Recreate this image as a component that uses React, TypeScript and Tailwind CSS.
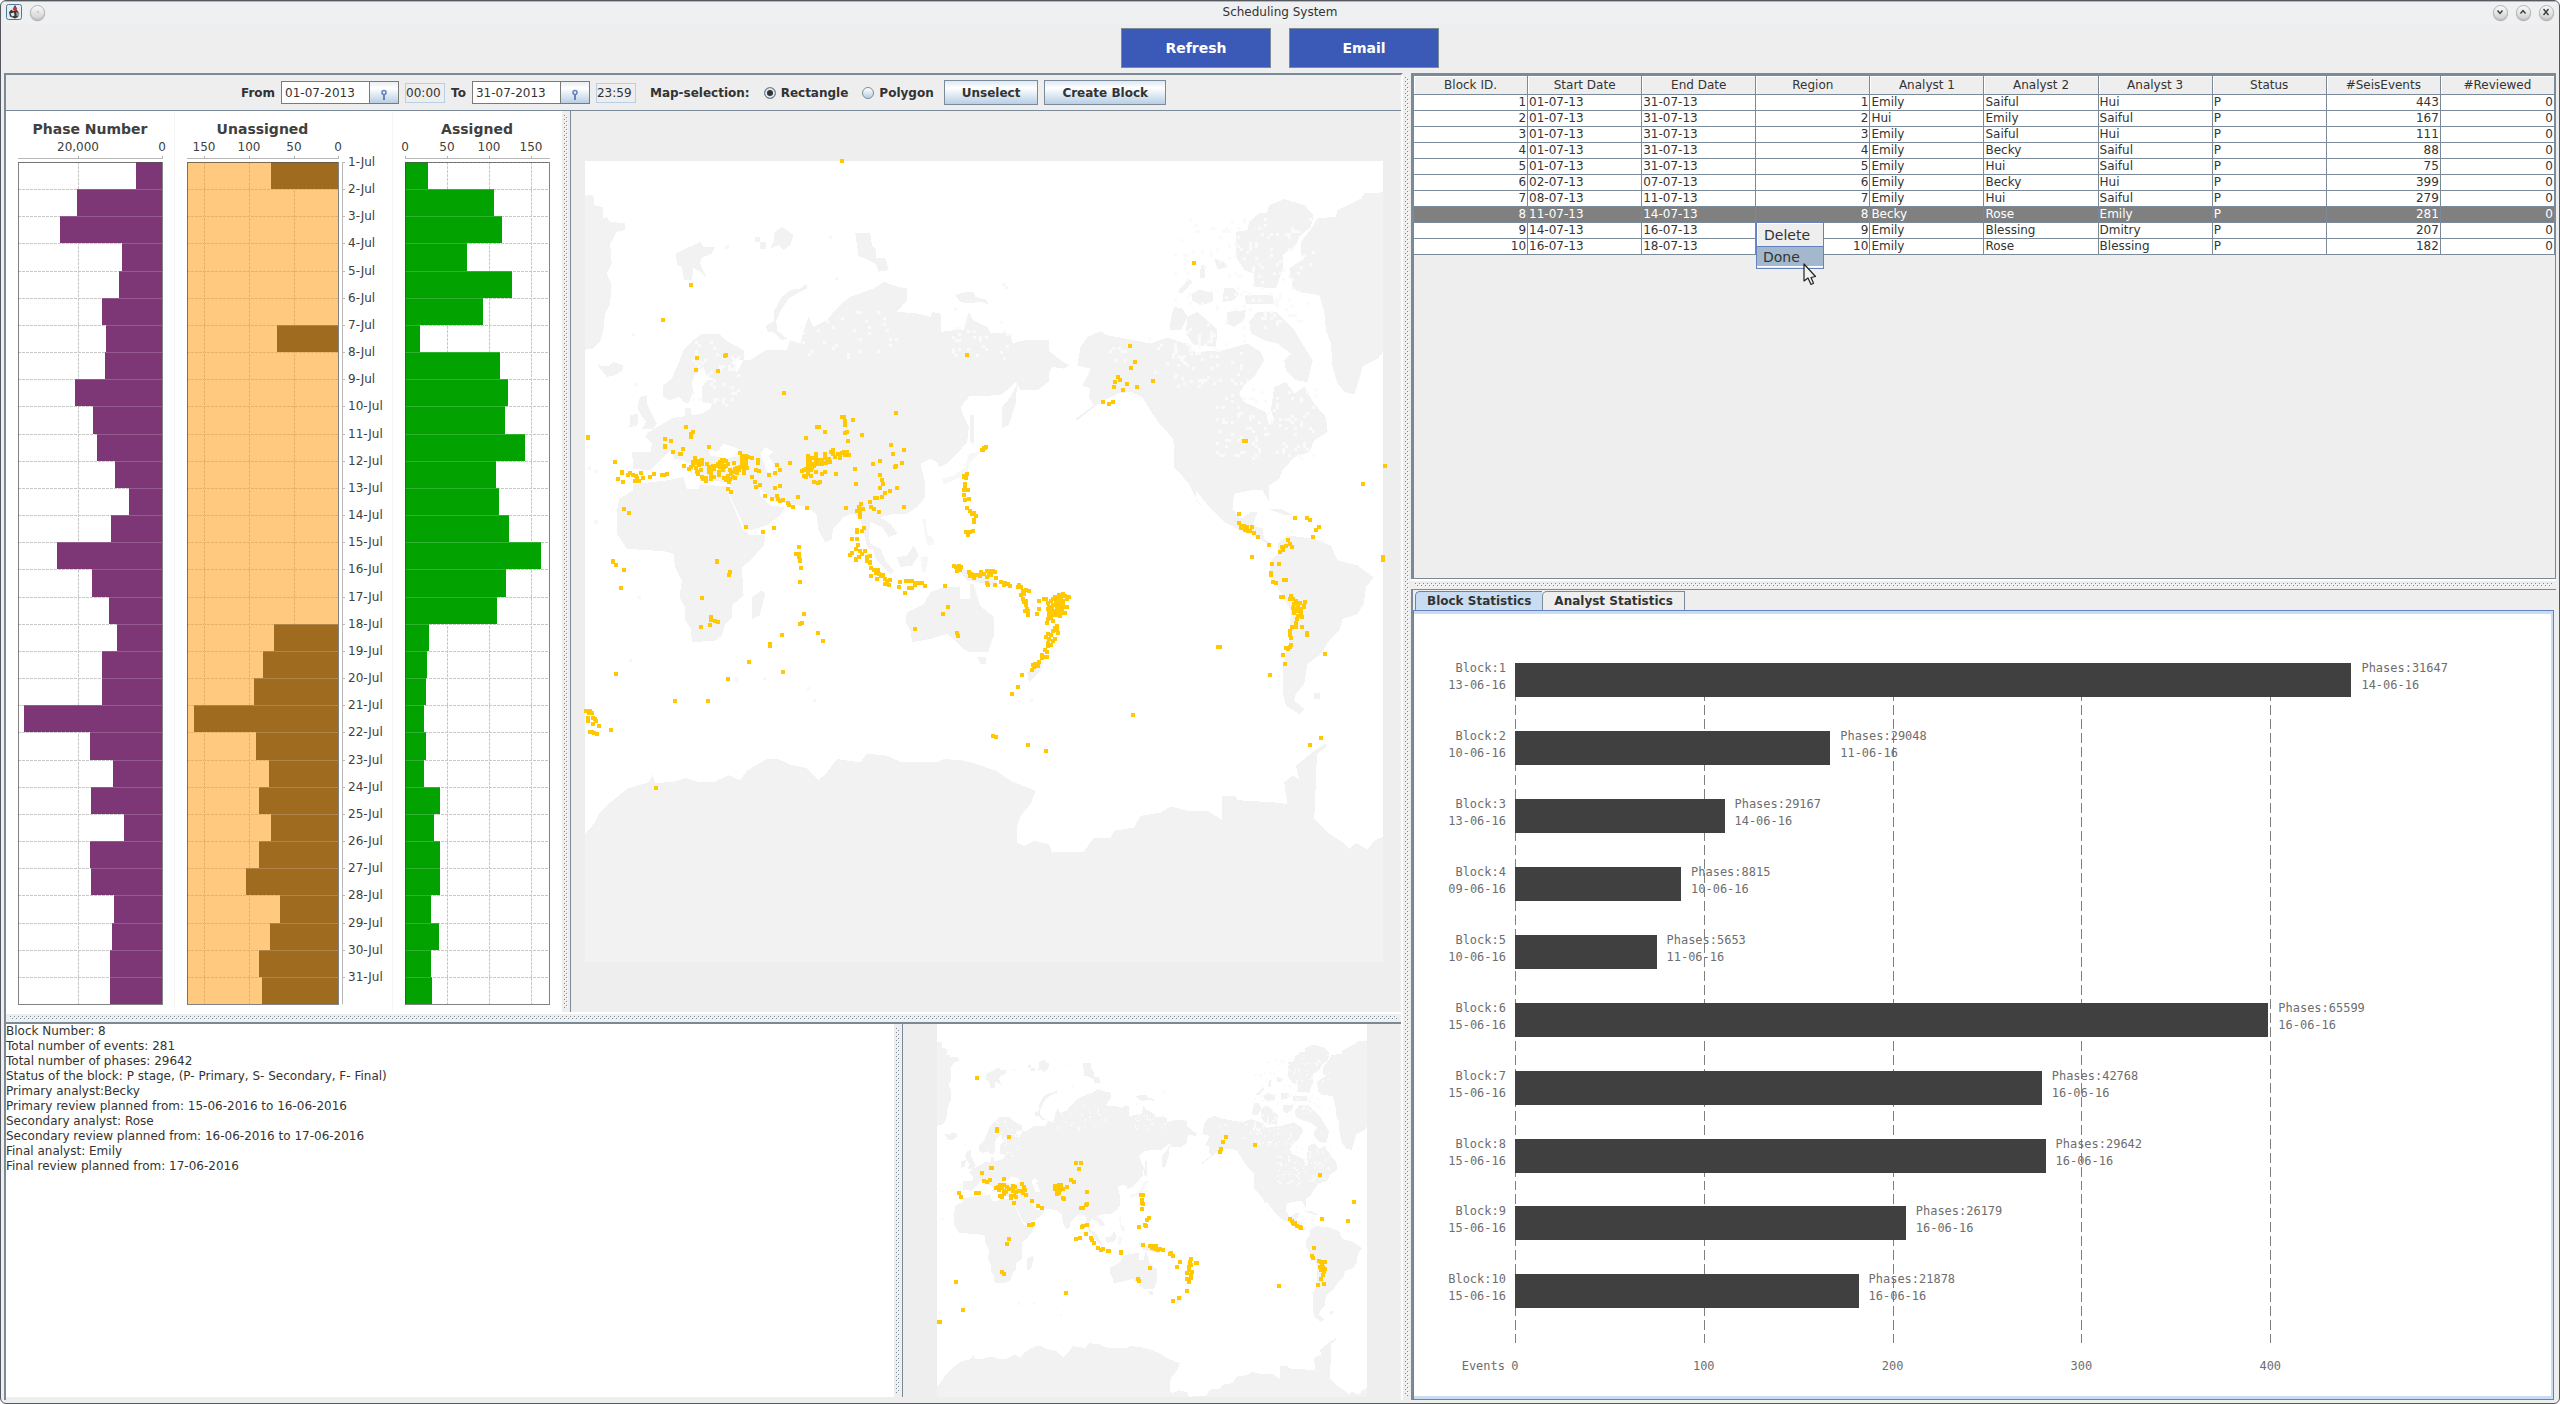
import React from "react";

type Point = [number, number];

const parsePoints = (text: string): Point[] =>
  text
    .trim()
    .split(/\s+/)
    .map((pair) => pair.split(",").map(Number) as Point);

/* ------------------------------------------------------------------ data */

const PHASES = [
  136, 77, 60, 122, 119, 102, 106, 105, 75, 93, 97, 115, 129, 111, 57, 92, 109, 117, 102, 102, 24, 90, 113, 91, 124,
  90, 91, 114, 112, 110, 110,
];

const UNASSIGNED: (number | null)[] = [
  271, null, null, null, null, null, 277, null, null, null, null, null, null, null, null, null, null, 274, 263, 254,
  194, 256, 269, 259, 271, 259, 246, 280, 270, 259, 262,
];

const ASSIGNED = [
  428, 494, 502, 467, 512, 483, 420, 500, 508, 505, 525, 496, 499, 509, 541, 506, 497, 429, 427, 426, 424, 426, 424,
  440, 434, 440, 440, 431, 439, 431, 432,
];

const COLUMNS = [
  "Block ID.",
  "Start Date",
  "End Date",
  "Region",
  "Analyst 1",
  "Analyst 2",
  "Analyst 3",
  "Status",
  "#SeisEvents",
  "#Reviewed",
];

const NUMERIC = [true, false, false, true, false, false, false, false, true, true];

const ROWS = [
  ["1", "01-07-13", "31-07-13", "1", "Emily", "Saiful", "Hui", "P", "443", "0"],
  ["2", "01-07-13", "31-07-13", "2", "Hui", "Emily", "Saiful", "P", "167", "0"],
  ["3", "01-07-13", "31-07-13", "3", "Emily", "Saiful", "Hui", "P", "111", "0"],
  ["4", "01-07-13", "31-07-13", "4", "Emily", "Becky", "Saiful", "P", "88", "0"],
  ["5", "01-07-13", "31-07-13", "5", "Emily", "Hui", "Saiful", "P", "75", "0"],
  ["6", "02-07-13", "07-07-13", "6", "Emily", "Becky", "Hui", "P", "399", "0"],
  ["7", "08-07-13", "11-07-13", "7", "Emily", "Hui", "Saiful", "P", "279", "0"],
  ["8", "11-07-13", "14-07-13", "8", "Becky", "Rose", "Emily", "P", "281", "0"],
  ["9", "14-07-13", "16-07-13", "9", "Emily", "Blessing", "Dmitry", "P", "207", "0"],
  ["10", "16-07-13", "18-07-13", "10", "Emily", "Rose", "Blessing", "P", "182", "0"],
];

const BLOCKS = [
  { id: 1, start: "13-06-16", events: 443, phases: 31647, end: "14-06-16" },
  { id: 2, start: "10-06-16", events: 167, phases: 29048, end: "11-06-16" },
  { id: 3, start: "13-06-16", events: 111, phases: 29167, end: "14-06-16" },
  { id: 4, start: "09-06-16", events: 88, phases: 8815, end: "10-06-16" },
  { id: 5, start: "10-06-16", events: 75, phases: 5653, end: "11-06-16" },
  { id: 6, start: "15-06-16", events: 399, phases: 65599, end: "16-06-16" },
  { id: 7, start: "15-06-16", events: 279, phases: 42768, end: "16-06-16" },
  { id: 8, start: "15-06-16", events: 281, phases: 29642, end: "16-06-16" },
  { id: 9, start: "15-06-16", events: 207, phases: 26179, end: "16-06-16" },
  { id: 10, start: "15-06-16", events: 182, phases: 21878, end: "16-06-16" },
];

const DETAILS = [
  "Block Number: 8",
  "Total number of events: 281",
  "Total number of phases: 29642",
  "Status of the block: P stage, (P- Primary, S- Secondary, F- Final)",
  "Primary analyst:Becky",
  "Primary review planned from: 15-06-2016 to 16-06-2016",
  "Secondary analyst: Rose",
  "Secondary review planned from: 16-06-2016 to 17-06-2016",
  "Final analyst: Emily",
  "Final review planned from: 17-06-2016",
].join("\n");

/* Event epicentres, one list per quadrant of the world map. */
const EVENTS_NW = parsePoints(`
846,93 393,465 309,570 411,684 408,720 498,675 495,678 474,723 672,789 1221,675 1008,849 846,861 852,861 855,872 855,884
879,870 771,891 775,891 795,906 738,924 855,909 861,906 864,933 906,915 993,945 999,972 1032,960 1026,999 1005,1011
1008,1008 960,993 939,1002 885,1017 888,1062 960,1035 964,1048 969,1062 960,1074 990,1083 975,1089 966,1101 1011,1074
945,1104 951,1104 930,1114 933,1131 942,1137 957,1146 1032,1131 84,920 84,924 378,891 398,906 393,910 393,921 315,927 333,933
315,946 315,951 447,951 339,966 369,957 360,972 363,972 165,996 186,1025 186,1029 174,1047 189,1056 204,1035 210,1029 219,1035 228,1036
231,1044 225,1052 237,1052 243,1029 249,1044 270,1041 282,1032 306,1035 313,1035 321,1032 192,1137 207,1149
372,1008 387,1017 393,1011 399,1005 399,996 405,982 405,990 411,998 416,1004 425,988 417,992 408,1012 411,1024
414,1032 423,1020 427,1000 425,1041 430,1046 438,1052 441,1002 438,1044 447,1012 453,1010 460,1006 468,1006
474,1000 480,996 486,988 492,990 498,992 502,1000 498,1006 486,1002 478,1010 453,1020 453,1030 453,1040 453,1047
462,1040 447,1024 462,1016 477,1024 477,1034 489,1018 492,1010 492,1042 498,1050 507,1056 510,1046 504,1036
512,1030 510,1020 518,1024 518,1040 524,1042 524,1016 522,999 531,1014 531,1029 538,1010 536,1020 540,969
546,976 546,990 546,1002 552,1010 552,1028 552,1018 558,990 558,978 562,981 558,1000 560,1012 576,984 594,990
594,998 586,1020 597,1023 576,1041 585,1056 588,1070 600,1065 504,1077 513,1086 627,1035 645,1029 660,1020
651,1005 690,999 645,1074 660,1068 615,1097 636,1105 651,1098 654,1106 660,1112 669,1110 684,1119 687,1125
699,1131 714,1101 741,1134 558,1191 609,1204 642,1194
744,978 744,988 744,998 742,992 750,1000 750,990 755,984 768,972 768,982 766,992 774,990 774,1002 780,996
786,990 795,972 795,982 800,988 798,998 786,1000 808,994 806,986 813,966 819,960 819,972 825,980 834,970
840,978 840,984 846,968 852,966 855,974 861,966 867,974 744,1010 738,1016 732,1020 724,1023 730,1036 736,1040
744,1032 744,1022 752,1018 756,1012 762,1006 768,1026 762,1000 752,1036 795,1026 786,1032 828,1032 762,1056
774,1059 780,1056 858,1134 903,1122 897,1130 891,1142 900,1142 909,1137 900,1152 900,1160 912,1194 906,1203
891,1200 891,1206 876,1227 891,1227 894,1245 888,1256 900,1262 876,1269 870,1275 906,1272 915,1263 897,1280
888,1287 920,1280 930,1278 921,1290 930,1296 933,1311 942,1318 954,1318 933,1335 948,1326 957,1330 951,1344
963,1336 969,1334 975,1344 980,1352 990,1347 975,1360 987,1362 1020,1353 1017,1368 1038,1350 1048,1350
1056,1350 1047,1371 1056,1371 1065,1362 1068,1358 1078,1358 1086,1356 1095,1365 1035,1386 1155,1365 1164,1428
717,1251 708,1272 717,1272 717,1280 720,1290 723,1311 720,1353 471,1293 510,1323 507,1332 159,1293 167,1302
192,1317 183,1371 426,1401 1266,960 1272,954 1277,951 1212,1038 1210,1040 1220,1032 1218,1042 1215,1062
1215,1072 1210,1080 1218,1080 1224,1080 1212,1094 1215,1110 1227,1107 1221,1134 1228,1142 1236,1152 1240,1148
1247,1158 1240,1168 1242,1174 1216,1206 1228,1206 1238,1203 1224,1214 1182,1305 1188,1308 1196,1305 1203,1308
1190,1320 1198,1318 1227,1323 1233,1330 1230,1336 1240,1334 1240,1342 1250,1332 1260,1336 1262,1323 1270,1330
1278,1338 1278,1322 1284,1328 1290,1320 1296,1322 1302,1323 1290,1334 1305,1341 1278,1356 1281,1362 1302,1362
1320,1353 1329,1362 1332,1356 1342,1360 1347,1365 1374,1364 1371,1369 1380,1370 1386,1380 1404,1380 1395,1378 1382,1394
1390,1390 1388,1404 1390,1414 1395,1410 1396,1424 1398,1434 1434,1410 1434,1434`);

const EVENTS_NE = parsePoints(`
699,399 507,648 522,696 510,714 471,741 477,750 462,756 459,771 498,762 486,780 528,771 576,753 426,816 444,822
456,816 851,933 855,933 1272,1008 1206,1062 834,1152 1002,1164 1038,1164 1048,1170 1074,1191 1065,1200 1056,1221
834,1178 840,1186 842,1194 850,1188 852,1200 858,1190 862,1202 868,1202 873,1191 879,1209 891,1220 924,1245
873,1281 981,1230 986,1242 992,1251 975,1248 962,1250 966,1260 957,1266 933,1299 954,1299 930,1328 930,1334 936,1353
945,1356 970,1347 976,1347 1266,1281 1266,1287 961,1398 967,1398 990,1395 988,1405 996,1404 1004,1412 1000,1420
1010,1424 1018,1416 1032,1413 1028,1428 1000,1434 1012,1434 1020,1434 250,1404 256,1406 262,1416 270,1412
276,1404 282,1398 288,1404 294,1394 306,1391 300,1400 312,1396 324,1398 318,1406 308,1410 296,1412 286,1414
276,1422 266,1428 262,1436 274,1434 288,1426 298,1424 308,1424 316,1430 300,1434`);

const EVENTS_SW = parsePoints(`
732,99 726,126 720,129 774,156 789,180 666,162 630,190 630,196 567,243 669,273 504,294 444,360 345,360 168,279
453,108 453,117 465,120 474,123 450,132 423,138 1149,99 1065,144 1191,156 1194,165 1401,90 1401,102 1428,99
1392,90 1383,282 1371,318 1353,339 78,390 90,390 88,398 96,396 84,412 84,420 99,412 105,414 108,422 99,429
117,435 90,453 96,453 102,456 111,459 153,447 288,621 1296,465 1305,468 1401,492`);

const EVENTS_SE = parsePoints(`
266,90 276,90 290,94 300,96 297,106 288,104 276,102 266,104 262,114 260,128 272,112 278,120 312,96 318,80 290,86
304,86 288,135 282,142 290,148 278,152 292,158 262,160 255,168 270,164 282,174 276,182 264,176 262,186 272,194
262,196 252,208 260,214 260,228 244,222 243,232 252,230 234,243 228,250 232,256 222,250 216,252 220,260 213,267
516,402 255,510 773,198 777,198 927,282 966,222 972,249 990,192 988,200 980,206 975,203 988,152 988,162 990,172
993,138 1005,138 1004,128 1008,116 1012,106 1000,96 1006,86 1012,92 1020,96 1024,108 1018,84 1030,77 996,82
1024,138 1038,158 1038,164 1092,219 1080,471 1047,492`);

const WORLD_EVENTS: Point[] = [
  ...EVENTS_NW.map(([x, y]): Point => [x - 75, y - 93]),
  ...EVENTS_NE.map(([x, y]): Point => [x + 1125, y - 93]),
  ...EVENTS_SW.map(([x, y]): Point => [x - 75, y + 1257]),
  ...EVENTS_SE.map(([x, y]): Point => [x + 1125, y + 1257]),
];

/* Epicentres of the selected block. */
const BLOCK_EVENTS = parsePoints(`
255,204 315,357 315,362 351,381 1002,381 993,396 987,416 984,426 1089,405 1284,495 552,460 567,460 561,477
296,474 300,474 270,489 276,513 285,516 294,510 336,507 201,549 207,561 252,549 261,549 312,534 318,532 324,526
336,525 322,540 330,534 336,542 344,532 350,536 342,546 336,552 324,558 330,562 363,528 369,532 360,536 364,542
372,546 380,544 357,558 366,558 372,562 357,564 366,579 390,522 396,531 399,540 390,542 394,549 402,555 420,573
438,589 450,594 411,645 416,645 423,642 489,528 489,538 496,528 502,526 507,525 498,536 504,540 512,537 525,531 495,546
495,552 500,548 537,510 546,516 513,564 516,567 585,546 585,582 582,584 567,594 573,594 570,651 573,648 585,645
582,672 552,687 564,684 597,684 600,690 606,699 618,714 627,720 633,717 648,723 652,723 687,726 687,730 747,555
753,555 750,570 750,578 753,582 750,597 771,624 765,630 759,645 762,648 741,651 753,705 774,708 783,708 792,708
780,714 788,716 797,720 804,717 813,720 834,732 838,730 843,738 864,756 855,771 897,747 894,756 897,766 894,762
891,772 890,780 900,786 885,789 896,796 897,804 885,807 891,816 912,759 915,759 885,843 861,864 843,873 774,774
738,807 741,813 522,849 192,816 213,900 141,936 144,936 351,687 345,702 330,786 336,792 1386,576 1368,633
1290,627 1194,627 1200,632 1203,638 1209,640 1206,642 1215,648 1224,651 1227,654 1266,714 1260,738 1263,744
1281,753 1288,756 1299,756 1290,764 1284,771 1293,772 1299,776 1288,780 1296,786 1293,795 1287,807 1278,825
1296,822 1161,828`);

/* ------------------------------------------------------------------ maps */

const OLD_WORLD = [
  "M75 195L100 195L103 225L130 232L130 262L112 265L140 262L150 275L195 280L195 300L170 305L160 325L150 340L155 400L140 430L155 465L150 520L135 550L130 600L120 635L100 655L75 658Z",
  "M348 370L400 345L420 335L430 350L465 350L455 370L425 382L420 400L440 445L420 425L400 415L395 450L372 450L365 410L350 405Z",
  "M583 322h15v15h-15zM600 335h18v22h-18zM640 310L665 290L680 300L700 315L690 345L670 360L655 345L630 355L640 335Z",
  "M885 310L930 310L935 345L948 360L948 385L975 385L985 420L955 425L945 400L915 385L895 380Z",
  "M618 585L640 575L640 545L665 500L690 480L720 475L740 460L740 475L710 490L685 505L665 535L648 570L650 600L680 625L665 630L640 607L620 603Z",
  "M1183 495L1210 487L1240 487L1245 500L1280 510L1283 522L1260 515L1220 520L1200 515Z",
  "M113 705L145 708L160 695L188 705L188 720L165 735L140 740L125 720Z",
  "M240 800L262 795L262 825L275 850L290 880L280 897L245 897L258 875L240 850L232 830ZM210 855L235 850L232 885L208 892Z",
  "M310 765L335 745L355 700L370 660L400 630L425 610L475 610L500 632L550 660L550 690L520 685L515 700L530 715L520 745L470 750L440 740L430 710L405 730L395 760L400 785L385 820L370 815L360 800L330 810L310 800Z",
  "M217 966L272 966L275 940L255 920L262 908L300 885L340 862L375 858L375 835L390 832L395 855L425 850L450 835L455 820L425 815L425 770L440 750L515 745L540 710L550 690L570 690L600 670L620 658L680 658L690 630L720 640L730 600L745 560L760 590L800 570L820 545L845 520L870 500L940 475L970 455L1005 468L1040 475L1040 510L1010 545L1070 550L1110 560L1115 545L1140 550L1143 605L1180 600L1210 600L1215 575L1225 545L1238 570L1280 590L1290 608L1350 610L1355 640L1400 628L1464 630L1464 660L1500 690L1525 705L1510 715L1475 710L1464 730L1464 755L1430 780L1380 778L1365 755L1345 775L1320 795L1228 797L1200 830L1210 860L1225 890L1220 935L1190 970L1160 1000L1135 1010L1130 995L1110 985L1080 1000L1085 1020L1095 1060L1095 1100L1070 1130L1040 1150L1000 1150L960 1160L990 1180L1012 1210L985 1220L965 1190L930 1175L925 1215L935 1260L920 1250L910 1210L900 1160L870 1150L850 1160L818 1195L815 1225L795 1235L775 1200L768 1150L740 1130L690 1120L650 1115L615 1105L630 1125L675 1130L660 1155L620 1185L570 1200L550 1190L540 1160L515 1110L508 1085L510 1062L500 1055L440 1050L420 1030L400 1010L395 1030L380 1020L390 1000L355 985L345 990L330 960L310 980L290 1000L270 1020L218 1015Z",
  "M218 1062L320 1050L370 1040L380 1075L415 1075L420 1062L500 1068L510 1105L525 1140L550 1200L570 1215L615 1215L610 1245L570 1290L545 1310L550 1395L515 1425L515 1460L495 1480L485 1515L465 1530L395 1535L393 1495L375 1470L375 1430L358 1400L365 1350L345 1310L340 1270L310 1262L200 1255L170 1210L170 1145L178 1105L218 1080Z",
  "M575 1400L605 1380L615 1390L598 1455L575 1465Z",
  "M1370 760L1365 820L1345 885L1325 892L1325 830L1350 800Z",
  "M1230 855L1240 855L1240 940L1228 935Z",
  "M930 1240L960 1255L975 1290L1000 1320L990 1330L950 1290Z",
  "M1010 1280L1040 1275L1060 1245L1075 1275L1055 1305L1020 1310Z",
  "M1190 1310L1240 1325L1300 1345L1320 1375L1280 1360L1220 1350Z",
  "M1040 1445L1090 1420L1110 1385L1150 1370L1198 1368L1200 1405L1228 1405L1230 1360L1240 1362L1258 1425L1300 1460L1300 1515L1283 1565L1225 1565L1208 1555L1185 1530L1160 1510L1110 1525L1055 1535L1050 1500L1035 1475Z",
  "M1250 1580h25v20h-15zM1400 1625L1420 1615L1450 1590L1440 1620L1405 1655Z",
].join("");

/* Small islands, drawn lighter than the mainland. */
const ISLANDS = [
  "M1225 970L1260 965L1225 1000L1220 1040L1190 1045L1150 1062L1145 1045L1180 1035L1215 1010Z",
  "M1080 1280L1105 1275L1095 1325L1085 1325Z",
  "M1085 1165L1095 1165L1100 1210L1120 1225L1120 1245L1100 1245Z",
  "M495 345h12v12h-12zM807 318h9v9h-9zM825 440h9v9h-9zM1182 534h9v9h-9zM1323 459h9v9h-9zM1332 468h9v9h-9z",
  "M84 1011h9v9h-9zM105 1020h9v9h-9zM102 1170h12v12h-12zM216 609h9v9h-9zM225 759h9v9h-9zM234 1395h9v9h-9z",
  "M525 1640h9v18h-9zM609 1640h9v9h-9zM741 1668h9v9h-9zM759 1706h9v9h-9zM1407 1706h9v9h-9zM207 1584h9v9h-9z",
].join("");

const SEAS =
  "M445 955L470 965L490 940L535 955L545 975L500 985L450 975ZM600 970L615 950L640 965L625 975L640 1000L650 1030L620 1025L612 1000ZM600 1075L640 1110L625 1120L600 1095Z";

const NEW_WORLD = [
  "M1266 187L1210 190L1200 205L1130 240L1125 260L1070 265L1055 290L1020 335L1020 370L1030 385L985 415L995 470L1010 485L1075 495L1090 545L1095 600L1110 640L1115 710L1130 760L1150 785L1180 793L1200 730L1205 708L1250 685L1266 665Z",
  "M825 305L860 300L865 275L895 250L918 250L925 225L970 207L1030 225L1058 255L1050 290L1015 320L1005 345L965 375L965 420L945 475L880 470L880 430L850 420L825 380Z",
  "M650 485L685 445L695 455L665 490ZM695 490L715 478L757 490L755 515L720 525L695 512ZM720 405h12v40h-15zM760 385L790 395L798 412L770 418ZM790 475L820 475L835 490L820 510L785 515ZM852 495L935 495L935 522L855 522Z",
  "M640 530L665 535L680 560L660 600L628 598L630 565ZM680 560L710 545L750 580L770 600L765 650L700 645L675 610ZM800 545L855 540L850 570L820 590L797 580Z",
  "M865 575L890 545L945 545L1000 600L1030 650L1055 690L1040 755L1005 750L975 720L970 690L990 670L950 640L910 630L870 610Z",
  "M350 705L360 650L380 620L420 603L440 615L520 630L570 640L620 622L690 645L700 665L780 662L860 640L900 665L910 690L880 740L850 765L835 790L850 815L915 845L925 885L940 870L930 840L940 770L975 755L1000 790L1030 770L1060 820L1095 860L1100 905L1060 930L1045 965L1000 980L965 1020L955 1045L925 1065L925 1115L905 1080L870 1080L820 1090L815 1135L840 1165L870 1145L890 1145L875 1185L905 1195L910 1225L935 1240L920 1240L885 1220L850 1205L790 1175L750 1135L705 1080L705 1110L735 1130L715 1120L685 1060L640 1010L638 925L600 885L575 850L545 800L510 785L470 790L420 815L350 870L345 865L400 825L385 800L390 775L365 765L380 740L390 715Z",
  "M920 1135L960 1135L1000 1155L975 1155Z",
  "M950 1240L980 1215L1060 1225L1110 1245L1130 1290L1190 1305L1238 1340L1215 1370L1208 1420L1190 1450L1145 1465L1135 1500L1105 1530L1080 1570L1040 1600L1030 1660L1005 1690L1000 1710L1030 1735L1015 1750L975 1725L966 1690L966 1600L985 1540L990 1440L950 1370L925 1330L930 1290L950 1270Z",
  "M1060 1688h16v18h-16z",
].join("");

const ANTARCTICA =
  "M75 760L105 725L120 695L150 665L205 622L265 605L278 582L285 608L345 602L375 592L420 605L460 605L505 583L540 598L560 570L620 535L655 535L690 552L740 562L775 598L800 575L830 535L900 545L920 518L980 525L1020 543L1130 545L1150 535L1200 538L1250 550L1310 572L1350 600L1425 630L1410 670L1380 705L1368 740L1370 785L1390 795L1420 780L1465 790L1475 815L1570 812L1600 770L1650 770L1660 750L1720 740L1740 705L1800 695L1830 677L1880 690L1940 690L1985 718L1985 645L2025 645L2030 658L2140 665L2180 670L2170 605L2195 585L2215 595L2205 555L2260 510L2295 488L2295 500L2268 520L2265 600L2260 715L2300 755L2345 785L2365 805L2385 787L2420 805L2440 780L2466 768L2466 1143L75 1143Z";

/* Scatters small lakes over a rectangle, always in the same places. */
function lakes(x: number, y: number, width: number, height: number, count: number): string {
  let seed = x * 31 + y * 17 + 7;
  const next = () => {
    seed = (seed * 1103515245 + 12345) % 2147483648;
    return seed / 2147483648;
  };
  let path = "";
  for (let i = 0; i < count; i += 1) {
    const left = x + Math.floor((next() * width) / 9) * 9;
    const top = y + Math.floor((next() * height) / 9) * 9;
    path += `M${left} ${top}h9v9h-9z`;
  }
  return path;
}

const LAKES = [
  lakes(1765, 170, 420, 330, 150),
  lakes(1765, 500, 220, 180, 70),
  lakes(1890, 680, 300, 210, 110),
  lakes(1560, 530, 260, 130, 25),
  lakes(320, 540, 140, 190, 50),
  lakes(640, 440, 300, 150, 30),
  lakes(1100, 470, 180, 120, 30),
].join("");

function Continents() {
  return (
    <g shapeRendering="crispEdges">
      <rect width="2391" height="2400" fill="#ffffff" />
      <g transform="translate(-75 -93)">
        <path d={OLD_WORLD} fill="#f2f2f2" />
        <path d={ISLANDS} fill="#f7f7f7" />
        <path d={SEAS} fill="#ffffff" />
      </g>
      <path d={NEW_WORLD} fill="#f2f2f2" transform="translate(1125 -93)" />
      <path d={LAKES} fill="#fafafa" />
      <path d={ANTARCTICA} fill="#f2f2f2" transform="translate(-75 1257)" />
    </g>
  );
}

function Epicentres({ points }: { points: Point[] }) {
  return (
    <g fill="#ffc800" shapeRendering="crispEdges">
      {points.map(([x, y], i) => (
        <rect key={i} x={x - 6} y={y - 6} width="12" height="12" />
      ))}
    </g>
  );
}

function WorldMap() {
  return (
    <div className="flex min-w-0 grow basis-0 items-center justify-center border-l border-[#7a8a99] bg-[#eeeeee] pr-[18px] pl-3.5">
      <svg viewBox="0 0 2391 2400" className="max-h-full w-full overflow-visible" role="img" aria-label="World map of events">
        <Continents />
        <Epicentres points={WORLD_EVENTS} />
      </svg>
    </div>
  );
}

function BlockMap() {
  return (
    <div className="min-w-0 grow basis-0 overflow-hidden border-l border-[#7a8a99] bg-[#eeeeee] px-8">
      <svg viewBox="0 0 1290 1295" className="mx-auto w-[430px]" role="img" aria-label="Map of the selected block">
        <g transform="scale(0.5395)">
          <Continents />
        </g>
        <g transform="translate(-135 -42)">
          <Epicentres points={BLOCK_EVENTS} />
        </g>
      </svg>
    </div>
  );
}

/* ---------------------------------------------------------- split panes */

function Divider({ id, vertical }: { id: string; vertical?: boolean }) {
  return (
    <div
      role="separator"
      className={
        vertical
          ? "flex w-2 shrink-0 justify-center bg-[#eeeeee] py-1"
          : "flex h-2 shrink-0 items-center bg-[#eeeeee] px-1"
      }
    >
      <svg className={vertical ? "h-full w-1" : "h-1 w-full"} aria-hidden="true" shapeRendering="crispEdges">
        <pattern id={id} width="4" height="4" patternUnits="userSpaceOnUse">
          <rect x="0" y="0" width="1" height="1" fill="#7a8a99" />
          <rect x="2" y="2" width="1" height="1" fill="#7a8a99" />
          <rect x="1" y="1" width="1" height="1" fill="#ffffff" />
          <rect x="3" y="3" width="1" height="1" fill="#ffffff" />
        </pattern>
        <rect width="100%" height="100%" fill={`url(#${id})`} />
      </svg>
    </div>
  );
}

/* ------------------------------------------------------------ title bar */

function RoundButton({ label, children }: { label: string; children?: React.ReactNode }) {
  return (
    <button
      type="button"
      aria-label={label}
      className="flex size-[15px] items-center justify-center rounded-full border border-[#b4b4b6] bg-linear-to-b from-[#fafafa] to-[#d2d2d4] shadow-[0_1px_1px_#a0a0a0]"
    >
      <svg viewBox="0 0 8 8" className="size-2" fill="none" stroke="#3c3c3c" strokeWidth="1.4">
        {children}
      </svg>
    </button>
  );
}

function TitleBar() {
  return (
    <header className="flex h-[23px] shrink-0 items-center justify-between border-t border-[#b4b6ba] bg-[#eff0f2] px-0.5 pb-0.5">
      <div className="flex w-24 items-center gap-2">
        <svg viewBox="0 0 16 16" className="size-4" aria-hidden="true">
          <rect x=".5" y=".5" width="15" height="15" rx="2" fill="#e4eef4" stroke="#4c7a94" />
          <path d="M3 8L5.500 5.500L7 7L11 6L13 9L12 13L9 14.500L4 12.500Z" fill="#3a3a3a" />
          <path d="M4.500 9.500L8 8.500L8.500 11.500L6 12.500Z" fill="#e8e8e8" />
          <path d="M10 8L13.500 9L12.500 12.500L10.500 12Z" fill="#9a9a9a" />
          <circle cx="9" cy="4.800" r="2.100" fill="#d32a22" />
          <path d="M8 3L9 1L10 3Z" fill="#222222" />
        </svg>
        <RoundButton label="Window menu">
          <rect x="3.500" y="3.500" width="1" height="1" fill="#6c6c6c" stroke="none" />
        </RoundButton>
      </div>
      <h1 className="text-xs leading-4">Scheduling System</h1>
      <div className="flex w-24 items-center justify-end gap-2">
        <RoundButton label="Minimize">
          <path d="M1.500 2.500L4 5.500L6.500 2.500" />
        </RoundButton>
        <RoundButton label="Maximize">
          <path d="M1.500 5.500L4 2.500L6.500 5.500" />
        </RoundButton>
        <RoundButton label="Close">
          <path d="M1.500 1L6.500 7M6.500 1L1.500 7" />
        </RoundButton>
      </div>
    </header>
  );
}

/* -------------------------------------------------------------- toolbar */

function DateField({ label, date, time }: { label: string; date: string; time: string }) {
  return (
    <>
      <label htmlFor={`date-${label}`}>{label}</label>
      <div className="flex h-[23px] w-[118px] border border-[#7a7a7a]">
        <input
          id={`date-${label}`}
          defaultValue={date}
          className="w-[87px] bg-white pl-[3px] font-normal outline-none"
        />
        <button
          type="button"
          aria-label={`Pick ${label} date`}
          className="flex grow items-center justify-center border-l border-[#7a7a7a] bg-linear-to-b from-[#e8eff6] via-white via-30% to-[#b8cfe5]"
        >
          <svg viewBox="0 0 8 12" className="mt-1 h-3 w-2" fill="none" stroke="#6382bf" strokeWidth="1.600">
            <circle cx="4" cy="3.500" r="2" />
            <path d="M4 5.500V11" strokeWidth="2" />
          </svg>
        </button>
      </div>
      <input
        aria-label={`${label} time`}
        defaultValue={time}
        className="h-5 w-10 border border-[#b8cfe5] bg-[#eeeeee] font-normal outline-none"
      />
    </>
  );
}

function RadioOption({ label, checked }: { label: string; checked?: boolean }) {
  return (
    <label className="flex items-center gap-[5px] px-1">
      <input
        type="radio"
        name="map-selection"
        defaultChecked={checked}
        className="size-3 appearance-none rounded-full border border-[#7a8a99] bg-linear-to-b from-white to-[#b8cfe5] checked:bg-none checked:bg-[#333333] checked:shadow-[inset_0_0_0_2px_#dde8f2]"
      />
      {label}
    </label>
  );
}

const METAL_BUTTON =
  "h-[25px] border border-[#7a8a99] bg-linear-to-b from-[#dde8f3] via-white via-30% to-[#b8cfe5] px-[17px] font-bold";

function Toolbar() {
  return (
    <div className="flex h-9 shrink-0 items-center justify-center gap-1.5 border-b border-[#7a8a99] text-xs font-bold">
      <DateField label="From" date="01-07-2013" time="00:00" />
      <DateField label="To" date="31-07-2013" time="23:59" />
      <span className="pr-1 pl-2">Map-selection:</span>
      <RadioOption label="Rectangle" checked />
      <RadioOption label="Polygon" />
      <button type="button" className={METAL_BUTTON}>
        Unselect
      </button>
      <button type="button" className={METAL_BUTTON}>
        Create Block
      </button>
    </div>
  );
}

/* --------------------------------------------------------- daily charts */

const DAY_TOP = 162;
const DAY_BOTTOM = 1004;
const dayY = (i: number) => Math.round(DAY_TOP + (i * (DAY_BOTTOM - DAY_TOP)) / 31);

type DailyPlotProps = {
  title: string;
  left: number;
  right: number;
  ticks: { x: number; label: string }[];
  fill: string;
  background: string;
  grid: string;
  bars: (number | null)[];
  fromRight?: boolean;
};

function DailyPlot({ title, left, right, ticks, fill, background, grid, bars, fromRight }: DailyPlotProps) {
  return (
    <g shapeRendering="crispEdges">
      <text x={(left + right) / 2} y="134" textAnchor="middle" fontSize="14" fontWeight="bold" fill="#404040">
        {title}
      </text>
      <rect x={left} y={DAY_TOP} width={right - left} height={DAY_BOTTOM - DAY_TOP} fill={background} />
      {ticks.map((tick) => (
        <g key={tick.label}>
          <text x={tick.x} y="151" textAnchor="middle" fontSize="12" fill="#404040">
            {tick.label}
          </text>
          <path d={`M${tick.x + 0.5} 156V159`} stroke="#b0b0b0" />
          {tick.label !== "0" && (
            <path d={`M${tick.x + 0.5} ${DAY_TOP}V${DAY_BOTTOM}`} stroke={grid} strokeDasharray="3 1" />
          )}
        </g>
      ))}
      {bars.map((_, i) => (
        <path key={i} d={`M${left} ${dayY(i) + 0.5}H${right}`} stroke={grid} strokeDasharray="3 1" />
      ))}
      {bars.map((edge, i) => {
        if (edge === null) return null;
        const start = fromRight ? edge : left;
        const end = fromRight ? right : edge;
        return (
          <g key={i}>
            <rect x={start} y={dayY(i)} width={end - start} height={dayY(i + 1) - dayY(i)} fill={fill} />
            <path d={`M${start} ${dayY(i) + 0.5}H${end}`} stroke="#ffffff" strokeOpacity="0.180" />
          </g>
        );
      })}
      <path d={`M${left} 158.500H${right + 1}`} stroke="#b8b8b8" />
      <rect
        x={left + 0.5}
        y={DAY_TOP + 0.5}
        width={right - left}
        height={DAY_BOTTOM - DAY_TOP}
        fill="none"
        stroke="#404040"
        strokeOpacity="0.650"
      />
    </g>
  );
}

function DailyCharts() {
  return (
    <div className="w-[556px] shrink-0 bg-white">
      <svg viewBox="6 111 556 901" className="w-full" role="img" aria-label="Events and phases per day">
        <path d="M174.500 111V1012M392.500 111V1012" stroke="#f6f6f6" />
        <DailyPlot
          title="Phase Number"
          left={18}
          right={162}
          ticks={[
            { x: 78, label: "20,000" },
            { x: 162, label: "0" },
          ]}
          fill="#7e3776"
          background="#ffffff"
          grid="#c8c8c8"
          bars={PHASES}
          fromRight
        />
        <DailyPlot
          title="Unassigned"
          left={187}
          right={338}
          ticks={[
            { x: 204, label: "150" },
            { x: 249, label: "100" },
            { x: 294, label: "50" },
            { x: 338, label: "0" },
          ]}
          fill="#9f6b1f"
          background="#ffca7f"
          grid="#e6b066"
          bars={UNASSIGNED}
          fromRight
        />
        <DailyPlot
          title="Assigned"
          left={405}
          right={549}
          ticks={[
            { x: 405, label: "0" },
            { x: 447, label: "50" },
            { x: 489, label: "100" },
            { x: 531, label: "150" },
          ]}
          fill="#02a300"
          background="#ffffff"
          grid="#c8c8c8"
          bars={ASSIGNED}
        />
        <g shapeRendering="crispEdges">
          <path d={`M342.500 ${DAY_TOP}V${DAY_BOTTOM}`} stroke="#b8b8b8" />
          {ASSIGNED.map((_, i) => (
            <g key={i}>
              <path d={`M342 ${dayY(i) + 0.5}H345`} stroke="#b8b8b8" />
              <text x="348" y={dayY(i) + 4} fontSize="12" fill="#404040">
                {i + 1}-Jul
              </text>
            </g>
          ))}
        </g>
      </svg>
    </div>
  );
}

/* ---------------------------------------------------------- block table */

function BlockTable() {
  return (
    <table className="w-full table-fixed border-separate border-spacing-0 text-xs leading-[15px]">
      <thead>
        <tr>
          {COLUMNS.map((name) => (
            <th
              key={name}
              scope="col"
              className="h-[19px] border-r border-b border-[#7a8a99] bg-[#eeeeee] p-0 text-center font-normal shadow-[inset_1px_1px_0_#ffffff]"
            >
              {name}
            </th>
          ))}
        </tr>
      </thead>
      <tbody>
        {ROWS.map((row) => (
          <tr key={row[0]} className={row[0] === "8" ? "bg-[#808080] text-white" : "bg-white"}>
            {row.map((cell, i) => (
              <td
                key={i}
                className={
                  NUMERIC[i]
                    ? "h-4 border-r border-b border-[#7a8a99] px-px py-0 text-right"
                    : "h-4 border-r border-b border-[#7a8a99] px-px py-0 text-left"
                }
              >
                {cell}
              </td>
            ))}
          </tr>
        ))}
      </tbody>
    </table>
  );
}

function ContextMenu() {
  return (
    <div
      role="menu"
      className="absolute top-[146px] left-[342px] w-[68px] border border-[#6382bf] bg-[#eeeeee] pb-px text-sm leading-5"
    >
      <button type="button" role="menuitem" className="block h-[23px] w-full border-t border-l border-white pl-1.5 text-left">
        Delete
      </button>
      <button
        type="button"
        role="menuitem"
        className="block h-[21px] w-full border-t border-b border-t-[#6382bf] border-b-white bg-[#a3b8cc] pl-1.5 text-left leading-[18px]"
      >
        Done
      </button>
      <svg viewBox="0 0 14 24" className="absolute top-[40px] left-[46px] h-6 w-3.5" aria-hidden="true">
        <path
          d="M1 1V18L5 15L8 21.500L10.500 20.300L8 14.500L12.500 13.500Z"
          fill="#f2f2f2"
          stroke="#222222"
          strokeWidth="1.200"
          strokeLinejoin="round"
        />
      </svg>
    </div>
  );
}

/* ----------------------------------------------------- block statistics */

function BlockChart() {
  const originX = 1515;
  const perEvent = 1.89;
  return (
    <svg
      viewBox="1414 615 1138 780"
      className="w-full font-['DejaVu_Sans_Mono','Liberation_Mono',monospace]"
      role="img"
      aria-label="Events per block"
      fontSize="12"
      fill="#6e6e6e"
    >
      {[0, 100, 200, 300, 400].map((value) => (
        <g key={value}>
          <path
            d={`M${Math.round(originX + value * perEvent) + 0.5} 664V1345`}
            stroke="#808080"
            strokeDasharray="10 4"
            shapeRendering="crispEdges"
          />
          <text x={originX + value * perEvent} y="1372" textAnchor="middle">
            {value}
          </text>
        </g>
      ))}
      <text x="1505" y="1372" textAnchor="end">
        Events
      </text>
      {BLOCKS.map((block, i) => {
        const top = 664 + i * 68;
        const end = originX + block.events * perEvent;
        return (
          <g key={block.id}>
            <rect
              x={originX}
              y={top}
              width={block.events * perEvent}
              height="34"
              fill="#404040"
              shapeRendering="crispEdges"
            />
            <text x="1506" y={top + 9} textAnchor="end">
              Block:{block.id}
            </text>
            <text x="1506" y={top + 26} textAnchor="end">
              {block.start}
            </text>
            <text x={end + 10} y={top + 9}>
              Phases:{block.phases}
            </text>
            <text x={end + 10} y={top + 26}>
              {block.end}
            </text>
          </g>
        );
      })}
    </svg>
  );
}

function StatisticsTabs() {
  return (
    <section className="flex min-h-0 grow-[810] basis-0 flex-col border-t border-l-2 border-[#7a8a99] bg-[#eeeeee] pr-0.5">
      <div role="tablist" className="flex h-[21px] shrink-0 items-end border-b border-[#6382bf] pl-0.5 text-xs font-bold">
        <button
          type="button"
          role="tab"
          aria-selected="true"
          className="h-[19px] rounded-tl-[5px] border-t border-l border-[#6382bf] bg-[#c8ddf2] px-[11px]"
        >
          Block Statistics
        </button>
        <button
          type="button"
          role="tab"
          aria-selected="false"
          className="h-[19px] rounded-tl-[5px] border-t border-r border-l border-[#7a8a99] px-[11px]"
        >
          Analyst Statistics
        </button>
      </div>
      <div
        role="tabpanel"
        className="min-h-0 grow overflow-hidden border-x border-b border-[#6382bf] bg-white pt-[3px] pr-0.5 pb-[3px] shadow-[inset_0_3px_0_#c8ddf2,inset_0_-3px_0_#c8ddf2,inset_-2px_0_0_#c8ddf2]"
      >
        <BlockChart />
      </div>
    </section>
  );
}

/* ------------------------------------------------------------------ app */

export default function App() {
  return (
    <div className="flex h-screen flex-col rounded-t-md rounded-b-md border border-[#55585e] bg-[#eeeeee] px-[3px] pb-[3px] font-['DejaVu_Sans','Liberation_Sans',sans-serif] text-[#333333]">
      <TitleBar />

      <div className="flex h-[49px] shrink-0 items-center justify-center gap-[18px] pb-px text-sm font-bold text-white">
        <button type="button" className="h-10 w-[150px] border border-[#7a8a99] bg-[#3b59b6]">
          Refresh
        </button>
        <button type="button" className="h-10 w-[150px] border border-[#7a8a99] bg-[#3b59b6]">
          Email
        </button>
      </div>

      <main className="flex min-h-0 grow">
        <section className="flex min-w-0 grow-[1395] basis-0 flex-col border-t-2 border-r-2 border-l-2 border-[#7a8a99] border-r-white">
          <Toolbar />
          <div className="flex min-h-0 grow-[901] basis-0">
            <DailyCharts />
            <Divider id="grip-charts" vertical />
            <WorldMap />
          </div>
          <div className="h-0.5 shrink-0 bg-white" />
          <Divider id="grip-left" />
          <div className="flex min-h-0 grow-[373] basis-0 border-t-2 border-[#7a8a99] pb-[3px]">
            <textarea
              aria-label="Block details"
              readOnly
              defaultValue={DETAILS}
              className="block w-[888px] shrink-0 resize-none bg-white text-xs leading-[15px] outline-none"
            />
            <Divider id="grip-details" vertical />
            <BlockMap />
          </div>
        </section>

        <Divider id="grip-main" vertical />

        <div className="flex min-w-0 grow-[1145] basis-0 flex-col">
          <section className="relative min-h-0 grow-[502] basis-0 border-t-[3px] border-r border-b border-l-[3px] border-[#7a8a99]">
            <BlockTable />
            <ContextMenu />
          </section>
          <div className="h-0.5 shrink-0 bg-white" />
          <Divider id="grip-right" />
          <StatisticsTabs />
        </div>
      </main>
    </div>
  );
}
